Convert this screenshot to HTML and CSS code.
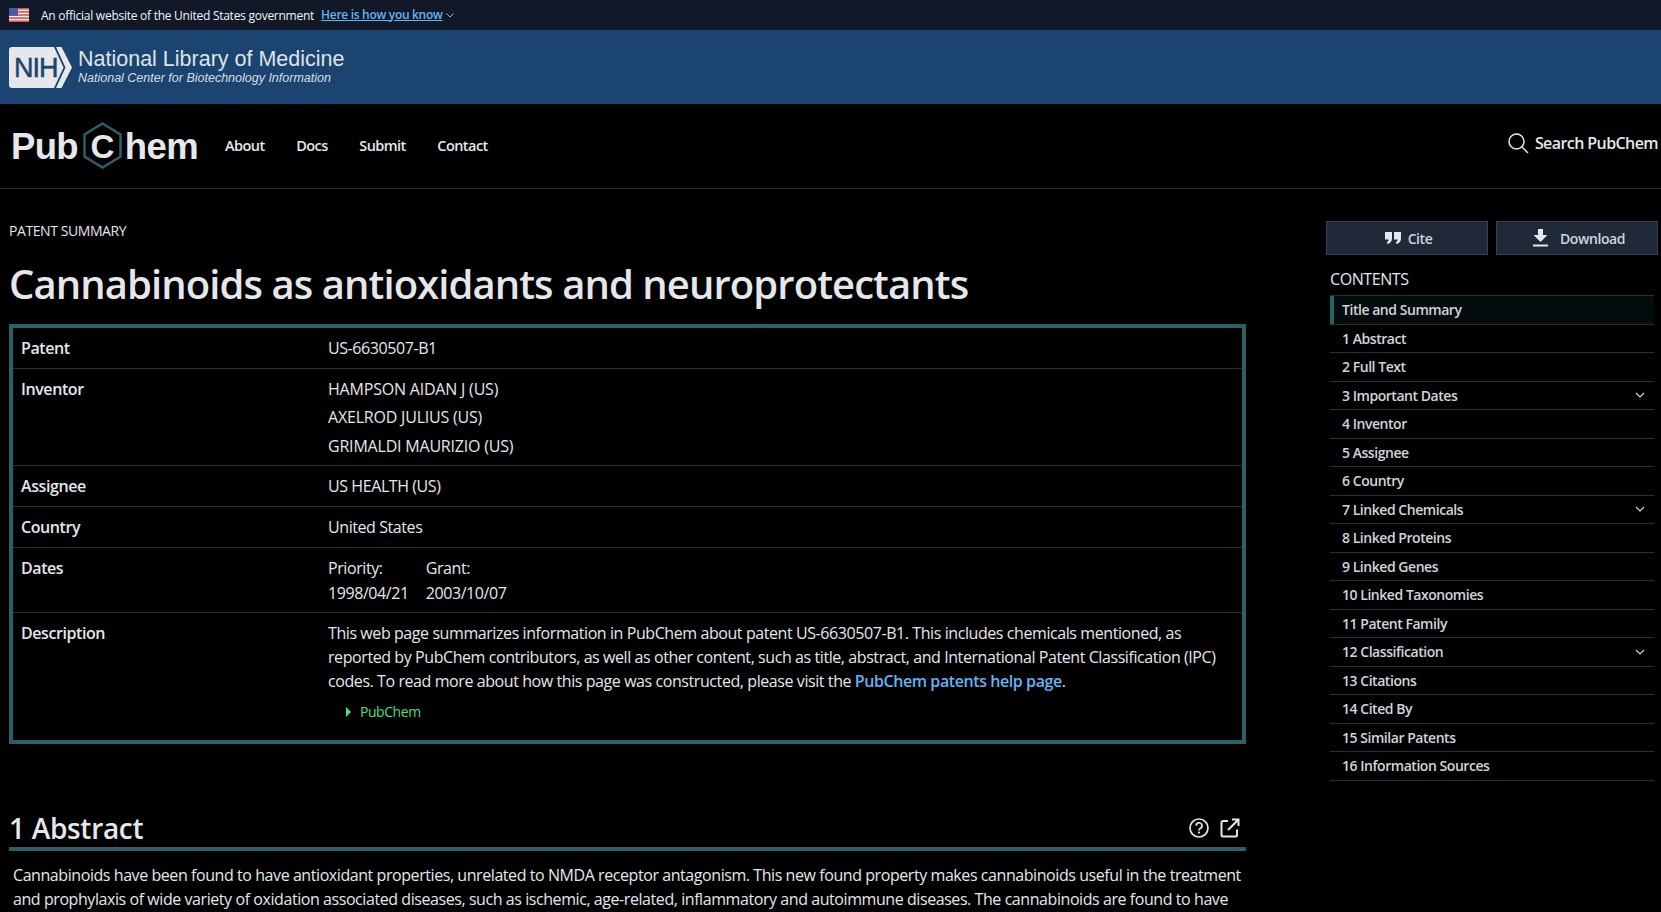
FILE: index.html
```html
<!DOCTYPE html>
<html lang="en">
<head>
<meta charset="utf-8">
<title>Cannabinoids as antioxidants and neuroprotectants</title>
<link rel="stylesheet" href="styles.css">
</head>
<body>
<div class="gov">
  <svg class="flag" width="20" height="14" viewBox="0 0 20 14"><rect width="20" height="14" fill="#f4f4f4"/><g fill="#d9534a"><rect width="20" height="1.6"/><rect y="3.1" width="20" height="1.6"/><rect y="6.2" width="20" height="1.6"/><rect y="9.3" width="20" height="1.6"/><rect y="12.4" width="20" height="1.6"/></g><rect width="9" height="7.8" fill="#4a5aa8"/></svg>
  <span>An official website of the United States government</span>
  <a class="gov-link" href="#">Here is how you know</a>
  <svg class="gov-chev" width="8" height="5" viewBox="0 0 8 5"><path d="M.5.5 4 4 7.500.5" fill="none" stroke="#9fb8d8"/></svg>
</div>
<div class="nih">
  <svg class="nih-logo" width="63" height="41" viewBox="0 0 63 41"><path d="M3 0H45L54.500 20.500 45 41H3Q0 41 0 38V3Q0 0 3 0Z" fill="#e5e7eb"/><path d="M47 0H52.500L63 20.500 52.500 41H47L56.500 20.500Z" fill="#e5e7eb"/><text x="5" y="30" class="nih-mark">NIH</text></svg>
  <div class="nih-text">
    <div class="nih-title">National Library of Medicine</div>
    <div class="nih-sub">National Center for Biotechnology Information</div>
  </div>
</div>
<header class="nav">
  <div class="logo">
    <span class="logo-pub">Pub</span>
    <span class="logo-c"><svg width="39" height="47" viewBox="0 0 39 47"><path d="M19.500 1.500 37.500 12.500V34.500L19.500 45.500 1.500 34.500V12.500Z" fill="none" stroke="#2a6068" stroke-width="2.500"/></svg><b>C</b></span>
    <span class="logo-hem">hem</span>
  </div>
  <nav class="links"><a href="#">About</a><a href="#">Docs</a><a href="#">Submit</a><a href="#">Contact</a></nav>
  <div class="search">
    <svg width="22" height="22" viewBox="0 0 22 22"><circle cx="9.500" cy="9.500" r="7.500" fill="none" stroke="#e5e7eb" stroke-width="1.500"/><path d="M15 15l6 6" stroke="#e5e7eb" stroke-width="1.500"/></svg>
    <span>Search PubChem</span>
  </div>
</header>
<div class="page">
  <main class="main">
    <div class="eyebrow">PATENT SUMMARY</div>
    <h1>Cannabinoids as antioxidants and neuroprotectants</h1>
    <div class="summary">
      <div class="row r1"><div class="key">Patent</div><div class="val">US-6630507-B1</div></div>
      <div class="row r2"><div class="key">Inventor</div><div class="val list"><div>HAMPSON AIDAN J (US)</div><div>AXELROD JULIUS (US)</div><div>GRIMALDI MAURIZIO (US)</div></div></div>
      <div class="row r1"><div class="key">Assignee</div><div class="val">US HEALTH (US)</div></div>
      <div class="row r1"><div class="key">Country</div><div class="val">United States</div></div>
      <div class="row r3"><div class="key">Dates</div><div class="val dates"><span>Priority:</span><span>Grant:</span><span>1998/04/21</span><span>2003/10/07</span></div></div>
      <div class="row r4"><div class="key">Description</div><div class="val desc">
        <p>This web page summarizes information in PubChem about patent US-6630507-B1. This includes chemicals mentioned, as reported by PubChem contributors, as well as other content, such as title, abstract, and International Patent Classification (IPC) codes. To read more about how this page was constructed, please visit the <a href="#">PubChem patents help page</a>.</p>
        <div class="source"><svg width="5" height="10" viewBox="0 0 5 10"><path d="M0 0 5 5 0 10Z" fill="#4ade80"/></svg><span>PubChem</span></div>
      </div></div>
    </div>
    <section class="abstract">
      <div class="sec-head">
        <h2>1 Abstract</h2>
        <div class="sec-icons">
          <svg width="22" height="22" viewBox="0 0 22 22"><circle cx="11" cy="11" r="9" fill="none" stroke="#e5e7eb" stroke-width="1.700"/><path d="M8.200 8.700a2.900 2.900 0 1 1 4.300 2.500c-1 .6-1.500 1.100-1.500 2.200" fill="none" stroke="#e5e7eb" stroke-width="1.700"/><circle cx="11" cy="15.500" r="1.100" fill="#e5e7eb"/></svg>
          <svg width="20" height="20" viewBox="0 0 20 20"><path d="M8 3H3Q1.500 3 1.500 4.500V17Q1.500 18.500 3 18.500H15.500Q17 18.500 17 17V11.500M8 12 18 2M12 1.500H18.500V8" fill="none" stroke="#e5e7eb" stroke-width="2"/></svg>
        </div>
      </div>
      <p class="abs-text">Cannabinoids have been found to have antioxidant properties, unrelated to NMDA receptor antagonism. This new found property makes cannabinoids useful in the treatment and prophylaxis of wide variety of oxidation associated diseases, such as ischemic, age-related, inflammatory and autoimmune diseases. The cannabinoids are found to have</p>
    </section>
  </main>
  <aside class="side">
    <div class="btns">
      <a class="btn" href="#"><svg width="16" height="12" viewBox="0 0 16 12"><path d="M0 0H7V6.500C7 9.500 5 11.500 2.500 12L1.800 10.300C3 9.800 3.600 8.800 3.600 7.500H0ZM9 0H16V6.500C16 9.500 14 11.500 11.500 12L10.800 10.300C12 9.800 12.600 8.800 12.600 7.500H9Z" fill="#e5e7eb"/></svg><span>Cite</span></a>
      <a class="btn dl" href="#"><svg width="15" height="18" viewBox="0 0 15 18"><path d="M5 0H10V6H14.500L7.500 13 .5 6H5ZM0 15.500H15V17.500H0Z" fill="#e5e7eb"/></svg><span>Download</span></a>
    </div>
    <div class="toc-title">CONTENTS</div>
    <ul class="toc">
      <li class="active">Title and Summary</li>
      <li>1 Abstract</li>
      <li>2 Full Text</li>
      <li class="more">3 Important Dates<svg width="10" height="6" viewBox="0 0 10 6"><path d="M1 1 5 5 9 1" fill="none" stroke="#d1d5db" stroke-width="1.200"/></svg></li>
      <li>4 Inventor</li>
      <li>5 Assignee</li>
      <li>6 Country</li>
      <li class="more">7 Linked Chemicals<svg width="10" height="6" viewBox="0 0 10 6"><path d="M1 1 5 5 9 1" fill="none" stroke="#d1d5db" stroke-width="1.200"/></svg></li>
      <li>8 Linked Proteins</li>
      <li>9 Linked Genes</li>
      <li>10 Linked Taxonomies</li>
      <li>11 Patent Family</li>
      <li class="more">12 Classification<svg width="10" height="6" viewBox="0 0 10 6"><path d="M1 1 5 5 9 1" fill="none" stroke="#d1d5db" stroke-width="1.200"/></svg></li>
      <li>13 Citations</li>
      <li>14 Cited By</li>
      <li>15 Similar Patents</li>
      <li>16 Information Sources</li>
    </ul>
  </aside>
</div>
</body>
</html>
```
FILE: styles.css
```css
* { box-sizing: border-box; }
body {
  margin: 0;
  background: #000;
  color: #e5e7eb;
  font-family: "Open Sans", "Noto Sans", sans-serif;
  font-size: 16px;
  letter-spacing: -0.42px;
}
a { text-decoration: none; color: inherit; }
p { margin: 0; }

.gov {
  height: 30px;
  background: #111827;
  display: flex;
  align-items: center;
  padding-left: 9px;
  font-size: 12px;
  letter-spacing: -0.26px;
  color: #f3f4f6;
}
.flag { margin-right: 12px; }
.gov-link { color: #60b5f5; text-decoration: underline; margin-left: 7px; font-weight: 600; letter-spacing: -0.3px; position: relative; top: -1px; }
.gov-chev { margin-left: 4px; }

.nih {
  height: 74px;
  background: #1b4570;
  display: flex;
  align-items: center;
  padding-left: 9px;
  gap: 6px;
  font-family: "Liberation Sans", sans-serif;
  letter-spacing: 0;
}
.nih-text { margin-top: -2px; }
.nih-mark { font: 27px "Liberation Sans", sans-serif; fill: #1b4570; stroke: #1b4570; stroke-width: .5px; letter-spacing: -1px; }
.nih-title { font-size: 21.500px; line-height: 24px; color: #dfe3ea; }
.nih-sub { font-size: 12.500px; font-style: italic; line-height: 14px; color: #d8dde6; }

.nav {
  height: 85px;
  border-bottom: 1px solid #2e2e2e;
  display: flex;
  align-items: center;
  padding-left: 11px;
  padding-right: 3px;
}
.logo {
  display: flex;
  align-items: center;
  font-family: "Liberation Sans", sans-serif;
  font-size: 36.500px;
  font-weight: 700;
  letter-spacing: 0;
  width: 214px;
  padding-top: 2px;
  color: #e5e7eb;
}
.logo-pub { letter-spacing: -0.7px; }
.logo-hem { letter-spacing: -0.6px; }
.logo-c {
  width: 39px;
  height: 47px;
  margin: 0 3px 4px 5px;
  position: relative;
  display: flex;
  align-items: center;
  justify-content: center;
}
.logo-c svg { position: absolute; inset: 0; }
.logo-c b { position: relative; font-weight: 700; font-size: 33px; top: 2px; }
.links { display: flex; gap: 31.500px; font-size: 14.500px; font-weight: 600; letter-spacing: -0.55px; margin-top: -2px; }
.search { margin-left: auto; display: flex; align-items: center; gap: 6px; font-size: 16px; font-weight: 600; letter-spacing: -0.58px; margin-top: -7px; }

.page { display: flex; }
.main { flex: 0 0 1237px; margin-left: 9px; }
.eyebrow { margin-top: 32px; font-size: 14px; line-height: 20px; }
h1 { margin: 17px 0 0; font-size: 40px; line-height: 52px; font-weight: 600; letter-spacing: -0.92px; }

.summary { margin-top: 14px; border: 4px solid #2a6068; height: 420px; }
.row {
  display: grid;
  grid-template-columns: 307px 1fr;
  padding: 8px 0 8px 8px;
  border-bottom: 1px solid #2e2e2e;
}
.row:last-child { border-bottom: 0; }
.r1 { height: 41px; }
.r2 { height: 97px; }
.r3 { height: 65px; }
.key { font-weight: 600; line-height: 24px; }
.val { line-height: 24px; }
.list { letter-spacing: -0.2px; }
.list div { line-height: 24px; margin-bottom: 4.300px; }
.dates { display: grid; grid-template-columns: auto auto; column-gap: 17px; justify-content: start; line-height: 25px; }
.desc p { width: 895px; }
.desc a { color: #60b5f5; font-weight: 600; }
.source { display: flex; align-items: center; gap: 9px; margin: 9px 0 0 18px; font-size: 14px; letter-spacing: -0.45px; color: #4ade80; line-height: 20px; }

.abstract { margin-top: 60px; }
.sec-head { display: flex; justify-content: space-between; align-items: center; border-bottom: 4px solid #2a6068; height: 47px; padding-top: 5px; }
h2 { margin: 0; font-size: 28px; line-height: 36px; font-weight: 600; letter-spacing: -0.3px; }
.sec-icons { display: flex; align-items: center; gap: 10px; padding-right: 6px; }
.abs-text { margin-top: 12px; padding-left: 4px; line-height: 24px; letter-spacing: -0.43px; }

.side { margin-left: 80px; width: 332px; padding-top: 32px; }
.btns { display: flex; gap: 8px; }
.btn {
  width: 162px;
  height: 34px;
  background: #1f2937;
  border: 1px solid #374151;
  display: flex;
  align-items: center;
  justify-content: center;
  gap: 7px;
  padding-left: 3px;
  font-size: 14px;
  font-weight: 600;
  color: #d1d5db;
}
.dl { gap: 12px; padding-left: 4px; }
.toc-title { margin: 12px 0 0 4px; font-size: 16px; line-height: 24px; }
.toc { list-style: none; margin: 4px 0 0 4px; padding: 0; width: 324px; border-top: 1px solid #2e2e2e; font-size: 14px; font-weight: 600; letter-spacing: -0.46px; color: #d1d5db; }
.toc li {
  height: 28.500px;
  border-bottom: 1px solid #2e2e2e;
  padding-left: 12px;
  padding-right: 9px;
  display: flex;
  align-items: center;
  justify-content: space-between;
}
.toc .active { background: #050c0d; border-left: 4px solid #2a6068; padding-left: 8px; }
```
